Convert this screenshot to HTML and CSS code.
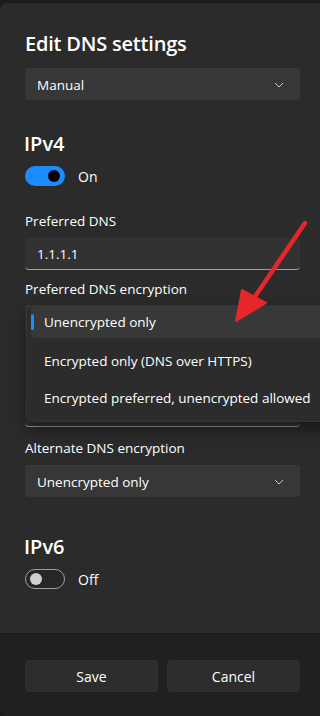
FILE: index.html
```html
<!DOCTYPE html>
<html>
<head>
<meta charset="utf-8">
<link rel="stylesheet" href="styles.css">
</head>
<body>
<div class="dialog">
  <div class="content">
    <h1 class="title">Edit DNS settings</h1>
    <div class="select">
      <span>Manual</span>
      <svg class="chev" width="10" height="6" viewBox="0 0 10 6"><path d="M1 1 L5 5 L9 1" fill="none" stroke="#c8c8c8" stroke-width="1"/></svg>
    </div>

    <h2 class="section">IPv4</h2>
    <div class="toggle-row">
      <span class="toggle on"><span class="knob"></span></span>
      <span class="toggle-label">On</span>
    </div>

    <label class="label first">Preferred DNS</label>
    <div class="input">1.1.1.1</div>

    <label class="label">Preferred DNS encryption</label>
    <div class="popup-anchor">
      <div class="select under-select"></div>
      <div class="input under-input"></div>
      <div class="popup">
        <div class="item selected"><span class="bar"></span>Unencrypted only</div>
        <div class="item">Encrypted only (DNS over HTTPS)</div>
        <div class="item">Encrypted preferred, unencrypted allowed</div>
      </div>
    </div>

    <label class="label alt">Alternate DNS encryption</label>
    <div class="select alt-select">
      <span>Unencrypted only</span>
      <svg class="chev" width="10" height="6" viewBox="0 0 10 6"><path d="M1 1 L5 5 L9 1" fill="none" stroke="#c8c8c8" stroke-width="1"/></svg>
    </div>

    <h2 class="section v6">IPv6</h2>
    <div class="toggle-row">
      <span class="toggle off"><span class="knob"></span></span>
      <span class="toggle-label">Off</span>
    </div>
  </div>
  <div class="footer">
    <button class="btn">Save</button>
    <button class="btn">Cancel</button>
  </div>
  <svg class="arrow" width="82" height="112" viewBox="0 0 82 112">
    <line x1="75" y1="11" x2="24" y2="86" stroke="#e6262b" stroke-width="4.5" stroke-linecap="round"/>
    <polygon points="6,109 12,78 36,91" fill="#e6262b" stroke="#e6262b" stroke-width="2" stroke-linejoin="round"/>
  </svg>
</div>
</body>
</html>
```

FILE: styles.css
```css
* { box-sizing: border-box; }
html, body {
  margin: 0;
  padding: 0;
  background: #1b1b1b;
  overflow: hidden;
  height: 716px;
}
body {
  font-family: "Open Sans", "Noto Sans", sans-serif;
  color: #ffffff;
  padding-top: 3px;
}
.dialog {
  position: relative;
  width: 340px;
  height: 713px;
  background: #2b2b2b;
  border-top-left-radius: 8px;
  border-bottom-left-radius: 8px;
  display: flex;
  flex-direction: column;
}
.content {
  padding: 0 20px 0 25px;
  width: 320px;
  flex: 1;
}
.title {
  margin: 27px 0 0 0;
  font-size: 20px;
  font-weight: 600;
  line-height: 28px;
  letter-spacing: -0.2px;
}
.select {
  margin-top: 10px;
  height: 32px;
  background: #373737;
  border-radius: 4px;
  display: flex;
  align-items: center;
  justify-content: space-between;
  padding: 0 16px 0 12px;
  font-size: 13.5px;
  color: #ffffff;
  border-top: 1px solid #3c3c3c;
}
.select.alt-select { margin-top: 7px; }
.chev { display: block; }
.section {
  margin: 31px 0 0 -1px;
  font-size: 20px;
  font-weight: 600;
  line-height: 26px;
}
.section.v6 { margin-top: 37px; }
.toggle-row {
  margin-top: 9px;
  display: flex;
  align-items: center;
  height: 20px;
}
.toggle {
  width: 40px;
  height: 20px;
  border-radius: 10px;
  display: flex;
  align-items: center;
  padding: 0 5px;
}
.toggle.on {
  background: #1a8cff;
  justify-content: flex-end;
}
.toggle.on .knob {
  width: 12px;
  height: 12px;
  border-radius: 50%;
  background: #000000;
}
.toggle.off {
  border: 1px solid #a0a0a0;
  background: #262626;
  padding: 0 4px;
}
.toggle.off .knob {
  width: 12px;
  height: 12px;
  border-radius: 50%;
  background: #d0d0d0;
}
.toggle-label {
  margin-left: 13px;
  font-size: 14px;
  color: #ffffff;
}
.label {
  display: block;
  font-size: 13.5px;
  line-height: 20px;
  margin-top: 9px;
  color: #ffffff;
}
.label.first { margin-top: 25px; }
.label.alt { margin-top: 11px; }
.input {
  margin-top: 7px;
  height: 32px;
  background: #323232;
  border-radius: 4px;
  border-bottom: 1px solid #a0a0a0;
  padding: 0 12px;
  display: flex;
  align-items: center;
  font-size: 13.5px;
}
.popup-anchor {
  position: relative;
  margin-top: 6px;
}
.under-select { margin-top: 0; }
.under-input { margin-top: 58px; }
.popup {
  position: absolute;
  left: 1px;
  right: -40px;
  top: 0;
  height: 117px;
  background: #2c2c2c;
  border: 1px solid #353535;
  border-radius: 8px;
  box-shadow: 0 8px 16px rgba(0,0,0,0.45);
  padding: 0 4px;
  display: flex;
  flex-direction: column;
}
.item {
  position: relative;
  height: 37px;
  flex: none;
  display: flex;
  align-items: center;
  padding-left: 13px;
  font-size: 13.5px;
  color: #ffffff;
  border-radius: 4px;
  white-space: nowrap;
}
.item.selected {
  background: #383838;
  height: 32px;
  margin-bottom: 4px;
}
.bar {
  position: absolute;
  left: 0;
  top: 8px;
  width: 3px;
  height: 16px;
  border-radius: 2px;
  background: #1a8cff;
}
.footer {
  height: 83px;
  background: #202020;
  border-top: 1px solid #1d1d1d;
  display: flex;
  gap: 9px;
  padding: 26px 0 0 25px;
  border-bottom-left-radius: 8px;
}
.btn {
  width: 133px;
  height: 32px;
  background: #2d2d2d;
  border: 1px solid #303030;
  border-radius: 4px;
  color: #ffffff;
  font-family: "Open Sans", "Noto Sans", sans-serif;
  font-size: 14px;
}
.arrow {
  position: absolute;
  left: 230px;
  top: 209px;
}
```
